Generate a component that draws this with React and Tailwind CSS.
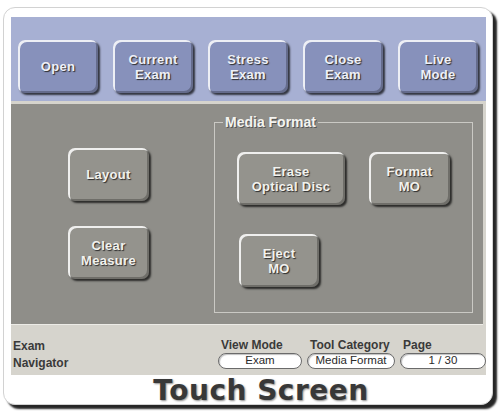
import React from "react";

const font = { fontFamily: '"Liberation Sans", Arial, sans-serif' };

const bevel =
  "rounded-[7px] flex flex-col items-center justify-center text-center font-bold text-[13px] leading-[15px] tracking-[0.3px] [text-shadow:1px_1px_1px_#2c2c2c] shadow-[inset_2px_2px_0_rgba(255,255,255,0.85),inset_-2px_-2px_0_rgba(0,0,0,0.25),2px_2px_2px_rgba(0,0,0,0.7)]";

const TopButton = ({ lines }) => (
  <div className={`${bevel} w-[80px] h-[53px] bg-[#8791bb] text-[#eef0f8]`}>
    {lines.map((l) => (
      <span key={l}>{l}</span>
    ))}
  </div>
);

const GrayButton = ({ lines, w = "w-[81px]" }) => (
  <div className={`${bevel} ${w} h-[53px] bg-[#94938d] text-[#f2f2ee]`}>
    {lines.map((l) => (
      <span key={l}>{l}</span>
    ))}
  </div>
);

const StatusField = ({ label, value, w }) => (
  <div className={`flex flex-col ${w}`}>
    <span className="pl-[3px] text-[12px] leading-[14px] font-bold text-[#3a3a3a]">
      {label}
    </span>
    <div className="mt-[1px] h-[16px] rounded-full bg-white border border-[#6a6a6a] flex items-center justify-center text-[11.5px] leading-none text-[#2a2a2a] shadow-[inset_1px_1px_1px_rgba(0,0,0,0.25)]">
      {value}
    </div>
  </div>
);

export default function App() {
  return (
    <div className="w-[501px] h-[414px] bg-white pt-[7px] pl-[3px]" style={font}>
      <div className="w-[490px] h-[398px] rounded-[12px] bg-white border border-[#d2d2d2] shadow-[4px_4px_2px_#262626] px-[7px] pt-[9px] flex flex-col">
        <div className="w-[475px] bg-[#d6d4cd] flex flex-col">
          {/* main command row */}
          <div className="h-[84px] bg-[#a7b0d3] pl-[7px] pt-[23px] flex gap-[15px]">
            <TopButton lines={["Open"]} />
            <TopButton lines={["Current", "Exam"]} />
            <TopButton lines={["Stress", "Exam"]} />
            <TopButton lines={["Close", "Exam"]} />
            <TopButton lines={["Live", "Mode"]} />
          </div>

          {/* tool area */}
          <div className="mt-[3px] w-[472px] h-[221px] bg-[#8f8e89] flex border-b border-[#ecebe6]">
            <div className="w-[203px] pl-[57px] pt-[44px] flex flex-col gap-[25px]">
              <GrayButton lines={["Layout"]} />
              <GrayButton lines={["Clear", "Measure"]} />
            </div>
            <fieldset className="mt-[10px] w-[256px] h-[199px] border border-[#cac9c4] px-[22px]">
              <legend className="ml-[-14px] px-[2px] text-[14px] leading-[16px] font-bold text-[#f4f4f0] [text-shadow:1px_1px_0_#555]">
                Media Format
              </legend>
              <div className="mt-[22px] flex gap-[24px]">
                <GrayButton lines={["Erase", "Optical Disc"]} w="w-[108px]" />
                <GrayButton lines={["Format", "MO"]} />
              </div>
              <div className="mt-[29px] pl-[2px]">
                <GrayButton lines={["Eject", "MO"]} w="w-[80px]" />
              </div>
            </fieldset>
          </div>

          {/* status line */}
          <div className="h-[50px] flex pt-[13px]">
            <div className="w-[207px] pl-[2px] text-[12px] leading-[17px] font-bold text-[#3a3a3a]">
              <div>Exam</div>
              <div>Navigator</div>
            </div>
            <div className="flex gap-[5px]">
              <StatusField label="View Mode" value="Exam" w="w-[84px]" />
              <StatusField label="Tool Category" value="Media Format" w="w-[88px]" />
              <StatusField label="Page" value="1 / 30" w="w-[86px]" />
            </div>
          </div>
        </div>

        <div className="flex-1 flex items-start justify-center pl-[26px] pt-[1px]">
          <span
            className="text-[28px] leading-[30px] font-bold text-[#383838] tracking-[0.5px] [text-shadow:1px_1px_2px_#8a8a8a]"
            style={{ fontFamily: '"DejaVu Sans", Verdana, sans-serif' }}
          >
            Touch Screen
          </span>
        </div>
      </div>
    </div>
  );
}
